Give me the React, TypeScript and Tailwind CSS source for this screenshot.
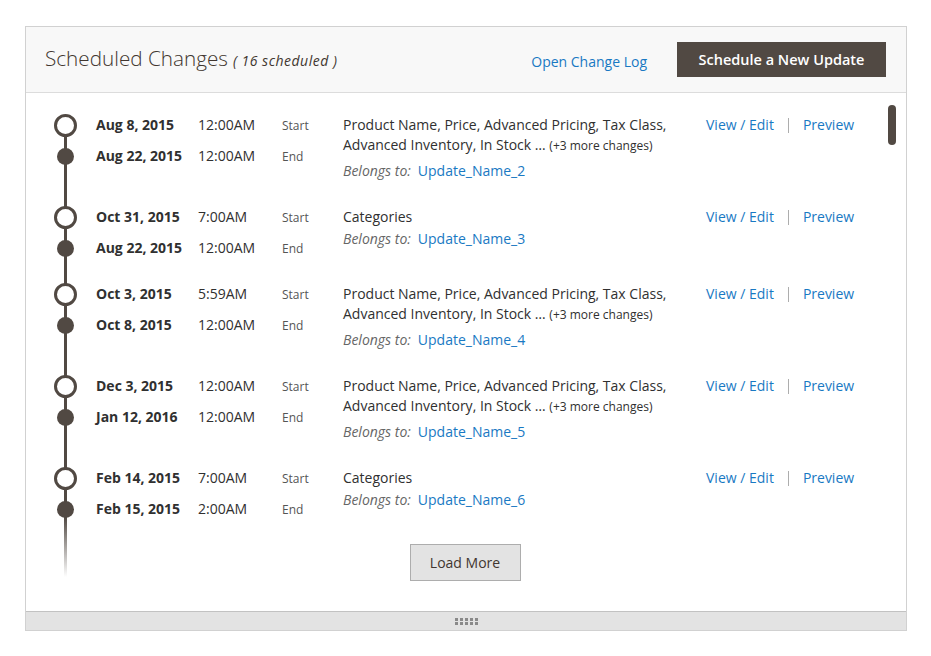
import React from "react";

type Row = {
  start: string;
  startTime: string;
  end: string;
  endTime: string;
  more: boolean;
  name: string;
};

const rows: Row[] = [
  { start: "Aug 8, 2015", startTime: "12:00AM", end: "Aug 22, 2015", endTime: "12:00AM", more: true, name: "Update_Name_2" },
  { start: "Oct 31, 2015", startTime: "7:00AM", end: "Aug 22, 2015", endTime: "12:00AM", more: false, name: "Update_Name_3" },
  { start: "Oct 3, 2015", startTime: "5:59AM", end: "Oct 8, 2015", endTime: "12:00AM", more: true, name: "Update_Name_4" },
  { start: "Dec 3, 2015", startTime: "12:00AM", end: "Jan 12, 2016", endTime: "12:00AM", more: true, name: "Update_Name_5" },
  { start: "Feb 14, 2015", startTime: "7:00AM", end: "Feb 15, 2015", endTime: "2:00AM", more: false, name: "Update_Name_6" },
];

function TimelineRow({ r }: { r: Row }) {
  return (
    <div className="flex items-start pl-[28px]">
      <div className="relative z-10 flex w-[23px] flex-col items-center">
        <div className="-mt-[1.5px] h-[23px] w-[23px] rounded-full border-[3px] border-[#514943] bg-white" />
        <div className="mt-[11px] h-[17px] w-[17px] rounded-full bg-[#514943]" />
      </div>
      <div className="ml-[19px] flex flex-col gap-[11px] text-[14px] leading-[20px] text-[#303030]">
        <div className="flex items-center">
          <span className="w-[102px] font-bold">{r.start}</span>
          <span className="w-[84px]">{r.startTime}</span>
          <span className="w-[61px] pt-[2px] text-[12px] leading-[18px] text-[#555]">Start</span>
        </div>
        <div className="flex items-center">
          <span className="w-[102px] font-bold">{r.end}</span>
          <span className="w-[84px]">{r.endTime}</span>
          <span className="w-[61px] pt-[2px] text-[12px] leading-[18px] text-[#555]">End</span>
        </div>
      </div>
      <div className="w-[363px] text-[14px] leading-[20px] text-[#303030]">
        {r.more ? (
          <>
            <div>Product Name, Price, Advanced Pricing, Tax Class,</div>
            <div>
              Advanced Inventory, In Stock …{" "}
              <span className="text-[12px]">(+3 more changes)</span>
            </div>
          </>
        ) : (
          <div>Categories</div>
        )}
        <div className={r.more ? "mt-[5px]" : "mt-[2px]"}>
          <span className="italic text-[#666]">Belongs to:</span>
          <a className="ml-[7px] text-[#1979c3]">{r.name}</a>
        </div>
      </div>
      <div className="flex items-center text-[14px] leading-[20px] text-[#1979c3]">
        <a>View / Edit</a>
        <span className="mx-[14px] h-[15px] w-px bg-[#adadad]" />
        <a>Preview</a>
      </div>
    </div>
  );
}

export default function App() {
  return (
    <div className="min-h-screen bg-white pl-[25px] pt-[26px] font-['Open_Sans',sans-serif]">
      <div className="w-[882px] border border-[#d1d1d1] bg-white">
        <div className="flex h-[66px] items-start border-b border-[#dcdcdc] bg-[#f8f8f8] pl-[19px] pr-[20px]">
          <h1 className="mt-[17px] text-[20.7px] leading-[28px] font-light text-[#41362f]">
            Scheduled Changes
            <span className="ml-[5px] text-[14px] tracking-[0.5px] italic font-normal">( 16 scheduled )</span>
          </h1>
          <a className="ml-auto mt-[25px] text-[14px] leading-[20px] text-[#1979c3]">Open Change Log</a>
          <button className="ml-[30px] mt-[15px] h-[35px] w-[209px] bg-[#514943] text-[14.5px] font-semibold text-white">
            Schedule a New Update
          </button>
        </div>

        <div className="relative h-[518px] pt-[22px]">
          <div className="absolute right-[10px] top-[12px] h-[40px] w-[8px] rounded-full bg-[#514943]" />
          <div className="relative">
            <div className="absolute left-[38px] top-[10px] flex w-[3px] flex-col">
              <div className="h-[392px] bg-[#514943]" />
              <div className="h-[60px] bg-linear-to-b from-[#514943] to-transparent" />
            </div>
            <div className="flex flex-col gap-[26px]">
              {rows.map((r) => (
                <TimelineRow key={r.name} r={r} />
              ))}
            </div>
          </div>
          <div className="mt-[25px] flex justify-center">
            <button className="-ml-[2px] h-[37px] w-[111px] border border-[#adadad] bg-[#e3e3e3] text-[14px] font-medium text-[#41362f]">
              Load More
            </button>
          </div>
        </div>

        <div className="flex h-[19px] items-center justify-center border-t border-[#c2c2c2] bg-[#e3e3e3]">
          <div className="grid grid-cols-5 gap-x-[2px] gap-y-[1px]">
            {Array.from({ length: 10 }).map((_, i) => (
              <div key={i} className="h-[3px] w-[3px] bg-[#8a8a8a]" />
            ))}
          </div>
        </div>
      </div>
    </div>
  );
}
